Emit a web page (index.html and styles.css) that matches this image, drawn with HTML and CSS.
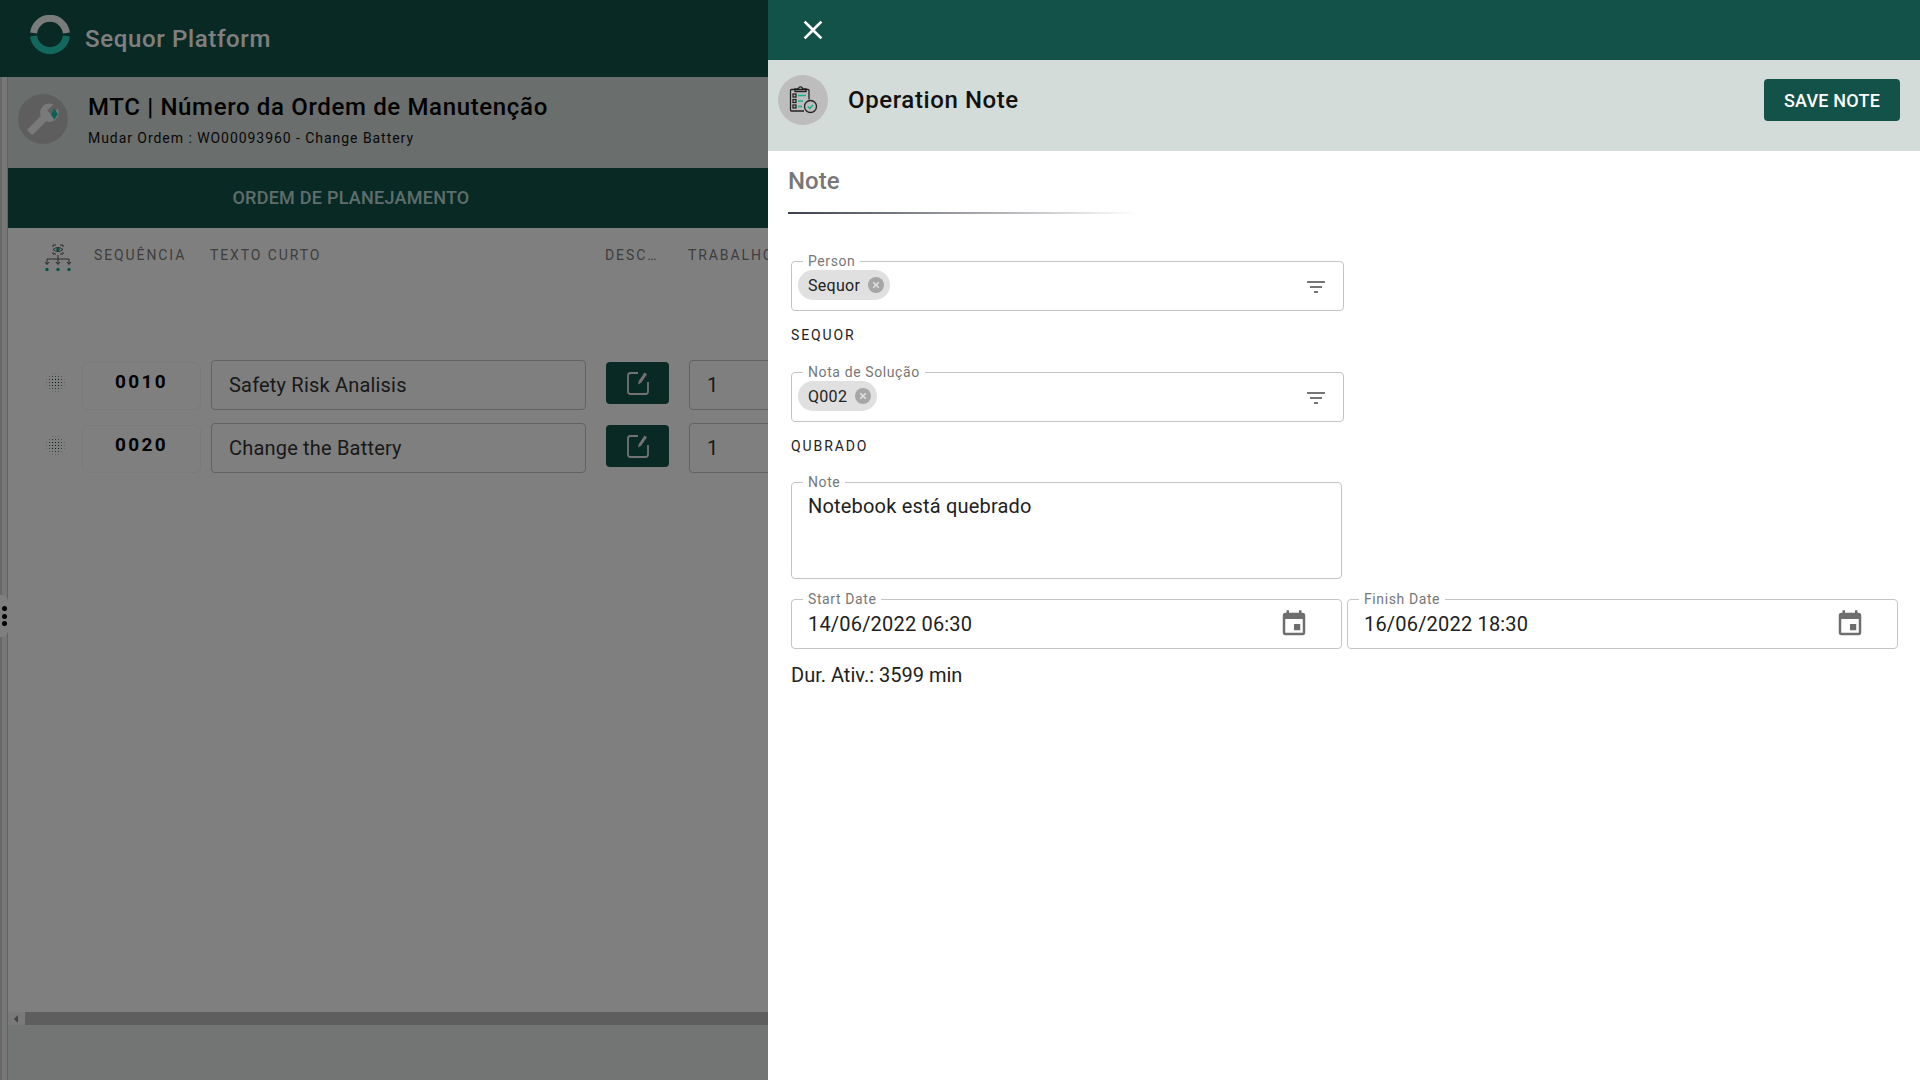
FILE: index.html
```html
<!DOCTYPE html>
<html lang="en">
<head>
    <meta charset="UTF-8">
    <meta name="viewport" content="width=device-width, initial-scale=1.0">
    <title>Sequor Platform</title>
    <link rel="stylesheet" href="styles.css">
</head>
<body>
    <div class="app">
        <header class="topbar">
            <svg class="logo" viewBox="0 0 40 40" aria-hidden="true">
                <path d="M3.6 18A16.5 16.5 0 0 1 36.4 18" fill="none" stroke="#f4f6f6" stroke-width="7"/>
                <path d="M3.6 21A16.5 16.5 0 0 0 36.4 21" fill="none" stroke="#26d0bd" stroke-width="7"/>
            </svg>
            <span class="brand">Sequor Platform</span>
        </header>

        <div class="workspace">
            <div class="side-strip"></div>
            <main class="page">
                <div class="page-head">
                    <div class="avatar">
                        <svg class="wrench" viewBox="0 0 24 24" aria-hidden="true">
                            <path transform="translate(24 0) scale(-1 1)" fill="#f4f4f4" d="M22.7 19l-9.1-9.1c.9-2.3.4-5-1.5-6.9-2-2-5-2.4-7.4-1.3L9 6 6 9 1.6 4.7C.4 7.1.9 10.1 2.9 12.1c1.9 1.9 4.6 2.4 6.9 1.5l9.1 9.1c.4.4 1 .4 1.4 0l2.3-2.3c.5-.4.5-1.1.1-1.4z"/>
                            <path fill="#1ec0a8" d="M20 4.5l2.5 4-2.5 4-2.4-3.600z"/>
                        </svg>
                    </div>
                    <div class="page-titles">
                        <h1>MTC | Número da Ordem de Manutenção</h1>
                        <p>Mudar Ordem : WO00093960 - Change Battery</p>
                    </div>
                </div>

                <div class="tabbar">
                    <div class="tab">ORDEM DE PLANEJAMENTO</div>
                </div>

                <div class="table-head">
                    <svg class="tree-icon" viewBox="0 0 30 28" aria-hidden="true">
                        <g fill="none" stroke="#555" stroke-width="1">
                            <path d="M10 3V1h3M17 1h3v2M10 8v2h3M17 10h3V8"/>
                            <path d="M10 5.500q5-4 10 0q-5 4-10 0z"/>
                            <path d="M15 11v4M4 20v-5h22v5M15 15v5"/>
                            <path d="M2 18l2 2.500L6 18M13 18l2 2.500 2-2.500M24 18l2 2.500 2-2.500"/>
                        </g>
                        <circle cx="15" cy="5.500" r="1.800" fill="#16a08a"/>
                        <circle cx="4" cy="25.500" r="1.700" fill="#16a08a"/>
                        <circle cx="15" cy="25.500" r="1.700" fill="#16a08a"/>
                        <circle cx="26" cy="25.500" r="1.700" fill="#16a08a"/>
                    </svg>
                    <span class="col col-seq">SEQUÊNCIA</span>
                    <span class="col col-text">TEXTO CURTO</span>
                    <span class="col col-desc">DESC…</span>
                    <span class="col col-work">TRABALHO</span>
                </div>

                <div class="rows">
                    <div class="row">
                        <div class="drag"></div>
                        <div class="seq">0010</div>
                        <div class="cell cell-text">Safety Risk Analisis</div>
                        <button class="edit-btn" type="button">
                            <svg viewBox="0 0 24 24" aria-hidden="true"><path d="M12 2H4.500A2.500 2.500 0 0 0 2 4.500v16A2.500 2.500 0 0 0 4.500 23h15a2.500 2.500 0 0 0 2.500-2.500V11" fill="none" stroke="#e4e4e4" stroke-width="1.800"/><path d="M12 13.500l.8-3.500L18.500 1.500l2.500 1.800-5.800 8.500z" fill="#e4e4e4"/></svg>
                        </button>
                        <div class="cell cell-qty">1</div>
                    </div>
                    <div class="row">
                        <div class="drag"></div>
                        <div class="seq">0020</div>
                        <div class="cell cell-text">Change the Battery</div>
                        <button class="edit-btn" type="button">
                            <svg viewBox="0 0 24 24" aria-hidden="true"><path d="M12 2H4.500A2.500 2.500 0 0 0 2 4.500v16A2.500 2.500 0 0 0 4.500 23h15a2.500 2.500 0 0 0 2.500-2.500V11" fill="none" stroke="#e4e4e4" stroke-width="1.800"/><path d="M12 13.500l.8-3.500L18.500 1.500l2.500 1.800-5.800 8.500z" fill="#e4e4e4"/></svg>
                        </button>
                        <div class="cell cell-qty">1</div>
                    </div>
                </div>

                <div class="hscroll">
                    <span class="hscroll-arrow"></span>
                    <div class="hscroll-thumb"></div>
                </div>
                <div class="page-foot"></div>
            </main>
        </div>

        <div class="side-handle"><i></i><i></i><i></i></div>
        <div class="scrim"></div>

        <aside class="drawer">
            <div class="drawer-top">
                <svg class="close-icon" viewBox="0 0 24 24" aria-hidden="true"><path fill="#fff" d="M19 6.410L17.590 5 12 10.590 6.410 5 5 6.410 10.590 12 5 17.590 6.410 19 12 13.410 17.590 19 19 17.590 13.410 12z"/></svg>
            </div>
            <div class="drawer-head">
                <div class="drawer-avatar">
                    <svg class="clip-icon" viewBox="0 0 30 30" aria-hidden="true">
                        <g fill="none" stroke="#222" stroke-width="1.300">
                            <path d="M16 26H3.500a1 1 0 0 1-1-1V5.500a1 1 0 0 1 1-1H20a1 1 0 0 1 1 1v9"/>
                            <path d="M7 6.500V3.800h3.500a2 2 0 0 1 4 0H18v2.700z"/>
                            <rect x="5" y="9" width="3" height="3"/>
                            <rect x="5" y="14.500" width="3" height="3"/>
                            <rect x="5" y="20" width="3" height="3"/>
                            <circle cx="22.500" cy="21.500" r="6"/>
                        </g>
                        <path d="M10 10.500h8M10 16h5M10 21.500h4" stroke="#12b28c" stroke-width="1.300" fill="none"/>
                        <path d="M19.800 21.500l2 2 3.200-3.600" stroke="#12b28c" stroke-width="1.500" fill="none"/>
                    </svg>
                </div>
                <h2>Operation Note</h2>
                <button class="save-btn" type="button">SAVE NOTE</button>
            </div>

            <div class="drawer-body">
                <div class="section-title">Note</div>
                <div class="section-rule"></div>

                <div class="field field-select">
                    <span class="field-label">Person</span>
                    <span class="chip">Sequor
                        <svg viewBox="0 0 16 16" aria-hidden="true"><circle cx="8" cy="8" r="8" fill="#a6a6a6"/><path d="M5.200 5.200l5.600 5.600M10.800 5.200l-5.600 5.600" stroke="#e0e0e0" stroke-width="1.600"/></svg>
                    </span>
                    <svg class="filter-icon" viewBox="0 0 24 24" aria-hidden="true"><path d="M10 18h4v-2h-4v2zM3 6v2h18V6H3zm3 7h12v-2H6v2z"/></svg>
                </div>
                <div class="helper">SEQUOR</div>

                <div class="field field-select">
                    <span class="field-label">Nota de Solução</span>
                    <span class="chip">Q002
                        <svg viewBox="0 0 16 16" aria-hidden="true"><circle cx="8" cy="8" r="8" fill="#a6a6a6"/><path d="M5.200 5.200l5.600 5.600M10.800 5.200l-5.600 5.600" stroke="#e0e0e0" stroke-width="1.600"/></svg>
                    </span>
                    <svg class="filter-icon" viewBox="0 0 24 24" aria-hidden="true"><path d="M10 18h4v-2h-4v2zM3 6v2h18V6H3zm3 7h12v-2H6v2z"/></svg>
                </div>
                <div class="helper helper-last">QUBRADO</div>

                <div class="field field-note">
                    <span class="field-label">Note</span>
                    Notebook está quebrado
                </div>

                <div class="dates">
                    <div class="field field-date">
                        <span class="field-label">Start Date</span>
                        <span>14/06/2022 06:30</span>
                        <svg class="cal-icon" viewBox="0 0 24 24" aria-hidden="true"><path d="M17 12h-5v5h5v-5zM16 1v2H8V1H6v2H5c-1.110 0-1.990.9-1.990 2L3 19c0 1.100.89 2 2 2h14c1.100 0 2-.9 2-2V5c0-1.100-.9-2-2-2h-1V1h-2zm3 18H5V8h14v11z"/></svg>
                    </div>
                    <div class="field field-date">
                        <span class="field-label">Finish Date</span>
                        <span>16/06/2022 18:30</span>
                        <svg class="cal-icon" viewBox="0 0 24 24" aria-hidden="true"><path d="M17 12h-5v5h5v-5zM16 1v2H8V1H6v2H5c-1.110 0-1.990.9-1.990 2L3 19c0 1.100.89 2 2 2h14c1.100 0 2-.9 2-2V5c0-1.100-.9-2-2-2h-1V1h-2zm3 18H5V8h14v11z"/></svg>
                    </div>
                </div>

                <div class="duration">Dur. Ativ.: 3599 min</div>
            </div>
        </aside>
    </div>
</body>
</html>
```

FILE: styles.css
```css
* {
    margin: 0;
    padding: 0;
    box-sizing: border-box;
    font-family: Roboto, "Liberation Sans", sans-serif;
}

body {
    background-color: #fff;
}

.app {
    position: relative;
    display: flex;
    flex-direction: column;
    width: 1920px;
    height: 1080px;
    overflow: hidden;
}

/* page behind the drawer */
.topbar {
    display: flex;
    align-items: center;
    gap: 15px;
    height: 77px;
    padding: 0 0 0 30px;
    background-color: #125249;
}

.logo {
    width: 40px;
    height: 40px;
    margin-top: -7px;
}

.brand {
    margin-top: 1px;
    color: #fff;
    font-size: 24px;
    font-weight: 500;
    letter-spacing: 0.65px;
}

.workspace {
    display: flex;
    flex: 1;
    min-height: 0;
}

.side-strip {
    width: 8px;
    background-color: #efefef;
    border-left: 2px solid #d0d0d0;
    border-right: 1px solid #c4c4c4;
}

.page {
    display: flex;
    flex-direction: column;
    flex: 1;
    min-width: 0;
}

.page-head {
    display: flex;
    align-items: center;
    gap: 20px;
    height: 91px;
    padding: 0 0 7px 10px;
    background-color: #d4dcd9;
}

.avatar {
    display: flex;
    align-items: center;
    justify-content: center;
    width: 50px;
    height: 50px;
    border-radius: 50%;
    background-color: #bdbdbd;
}

.wrench {
    width: 34px;
    height: 34px;
}

.page-titles h1 {
    font-size: 24px;
    font-weight: 500;
    letter-spacing: 0.65px;
    color: #000;
    line-height: 30px;
}

.page-titles p {
    margin-top: 8px;
    font-size: 14px;
    letter-spacing: 0.95px;
    color: #111;
}

.tabbar {
    height: 60px;
    background-color: #125249;
}

.tab {
    width: 686px;
    color: #bcdcd8;
    font-size: 18px;
    font-weight: 500;
    letter-spacing: 0.25px;
    line-height: 60px;
    text-align: center;
}

.table-head {
    display: flex;
    align-items: center;
    height: 54px;
    white-space: nowrap;
}

.tree-icon {
    width: 30px;
    height: 28px;
    margin: 6px 0 0 35px;
}

.col {
    color: #7c7c7c;
    font-size: 14px;
    letter-spacing: 1.9px;
}

.col-seq {
    margin-left: 21px;
    width: 116px;
}

.col-text {
    width: 395px;
}

.col-desc {
    width: 83px;
}

.rows {
    display: flex;
    flex-direction: column;
    gap: 13px;
    padding-top: 78px;
    flex: 1;
}

.row {
    display: flex;
    height: 50px;
    white-space: nowrap;
}

.drag {
    width: 21px;
    height: 21px;
    margin: 12px 16px 0 37px;
    background-image: radial-gradient(circle, #063f37 0.7px, transparent 1px);
    background-size: 3px 3px;
    -webkit-mask-image: radial-gradient(circle, #000 30%, transparent 72%);
    mask-image: radial-gradient(circle, #000 30%, transparent 72%);
}

.seq {
    width: 119px;
    height: 48px;
    margin-top: 2px;
    border: 1px solid #f4f4f4;
    border-radius: 6px;
    color: #000;
    font-size: 19px;
    font-weight: 700;
    letter-spacing: 2.3px;
    line-height: 38px;
    text-align: center;
}

.cell {
    height: 50px;
    border: 1px solid #c4c4c4;
    border-radius: 4px;
    color: #333;
    font-size: 20px;
    letter-spacing: 0.19px;
    line-height: 48px;
    flex-shrink: 0;
}

.cell-text {
    width: 375px;
    margin-left: 10px;
    padding-left: 17px;
}

.edit-btn {
    display: flex;
    align-items: center;
    justify-content: center;
    width: 63px;
    height: 42px;
    margin: 2px 20px 0;
    border: none;
    border-radius: 4px;
    background-color: #125249;
    flex-shrink: 0;
}

.edit-btn svg {
    width: 24px;
    height: 24px;
}

.cell-qty {
    width: 150px;
    padding-left: 17px;
}

.hscroll {
    display: flex;
    align-items: center;
    height: 13px;
    padding-left: 6px;
    background-color: #f4f4f4;
}

.hscroll-arrow {
    width: 0;
    height: 0;
    border-top: 4px solid transparent;
    border-bottom: 4px solid transparent;
    border-right: 4px solid #888;
}

.hscroll-thumb {
    flex: 1;
    height: 13px;
    margin-left: 7px;
    background-color: #bdbdbd;
}

.page-foot {
    height: 55px;
    background-color: #e6e9e8;
}

.side-handle {
    position: absolute;
    left: 0;
    top: 595px;
    display: flex;
    flex-direction: column;
    align-items: center;
    justify-content: center;
    gap: 2.5px;
    width: 8px;
    height: 42px;
    border-radius: 0 6px 6px 0;
    background-color: #fff;
}

.side-handle i {
    width: 5px;
    height: 5px;
    border-radius: 50%;
    background-color: #000;
}

.scrim {
    position: absolute;
    inset: 0;
    background-color: rgba(0, 0, 0, 0.5);
}

/* drawer */
.drawer {
    position: absolute;
    top: 0;
    right: 0;
    bottom: 0;
    width: 1152px;
    background-color: #fff;
}

.drawer-top {
    display: flex;
    align-items: center;
    height: 60px;
    padding-left: 29px;
    background-color: #125249;
}

.close-icon {
    width: 32px;
    height: 32px;
    margin-top: -1px;
}

.drawer-head {
    display: flex;
    align-items: center;
    height: 91px;
    padding: 0 20px 11px 10px;
    background-color: #d4dcd9;
}

.drawer-avatar {
    display: flex;
    align-items: center;
    justify-content: center;
    width: 50px;
    height: 50px;
    border-radius: 50%;
    background-color: #bdbdbd;
}

.clip-icon {
    width: 30px;
    height: 30px;
}

.drawer-head h2 {
    flex: 1;
    margin-left: 20px;
    color: #111;
    font-size: 24px;
    font-weight: 500;
    letter-spacing: 0.6px;
}

.save-btn {
    width: 136px;
    height: 42px;
    border: none;
    border-radius: 4px;
    background-color: #125249;
    color: #fff;
    font-size: 18px;
    font-weight: 500;
    letter-spacing: 0.2px;
}

.drawer-body {
    padding: 15px 0 0 23px;
}

.section-title {
    margin-left: -3px;
    color: #777;
    font-size: 24px;
    font-weight: 500;
    line-height: 30px;
}

.section-rule {
    width: 349px;
    height: 2px;
    margin: 16px 0 47px -3px;
    background-image: linear-gradient(to right, #3a3f4a, #fff);
}

.field {
    position: relative;
    border: 1px solid #c4c4c4;
    border-radius: 4px;
    background-color: #fff;
}

.field-label {
    position: absolute;
    top: -9px;
    left: 11px;
    padding: 0 5px;
    background-color: #fff;
    color: #777;
    font-size: 14px;
    letter-spacing: 0.6px;
    line-height: 16px;
}

.field-select {
    display: flex;
    align-items: flex-start;
    justify-content: space-between;
    width: 553px;
    height: 50px;
    padding: 8px 15px 0 6px;
}

.chip {
    display: flex;
    align-items: center;
    gap: 8px;
    height: 30px;
    padding: 0 6px 0 10px;
    border-radius: 15px;
    background-color: #e0e0e0;
    color: #222;
    font-size: 16px;
    letter-spacing: 0.3px;
}

.chip svg {
    width: 16px;
    height: 16px;
}

.filter-icon {
    width: 24px;
    height: 24px;
    margin-top: 5px;
    fill: #757575;
}

.helper {
    margin: 14px 0 27px;
    color: #222;
    font-size: 14px;
    letter-spacing: 1.9px;
    line-height: 20px;
}

.helper-last {
    margin-bottom: 26px;
}

.field-note {
    width: 551px;
    height: 97px;
    padding: 9px 16px;
    color: #212121;
    font-size: 20px;
    letter-spacing: 0.19px;
    line-height: 28px;
}

.dates {
    display: flex;
    gap: 5px;
    margin-top: 20px;
}

.field-date {
    display: flex;
    align-items: center;
    justify-content: space-between;
    width: 551px;
    height: 50px;
    padding: 0 32px 0 16px;
    color: #212121;
    font-size: 20px;
    letter-spacing: 0.19px;
}

.cal-icon {
    width: 30px;
    height: 30px;
    fill: #6e6e6e;
}

.duration {
    margin-top: 14px;
    color: #212121;
    font-size: 20px;
    line-height: 24px;
}
```
